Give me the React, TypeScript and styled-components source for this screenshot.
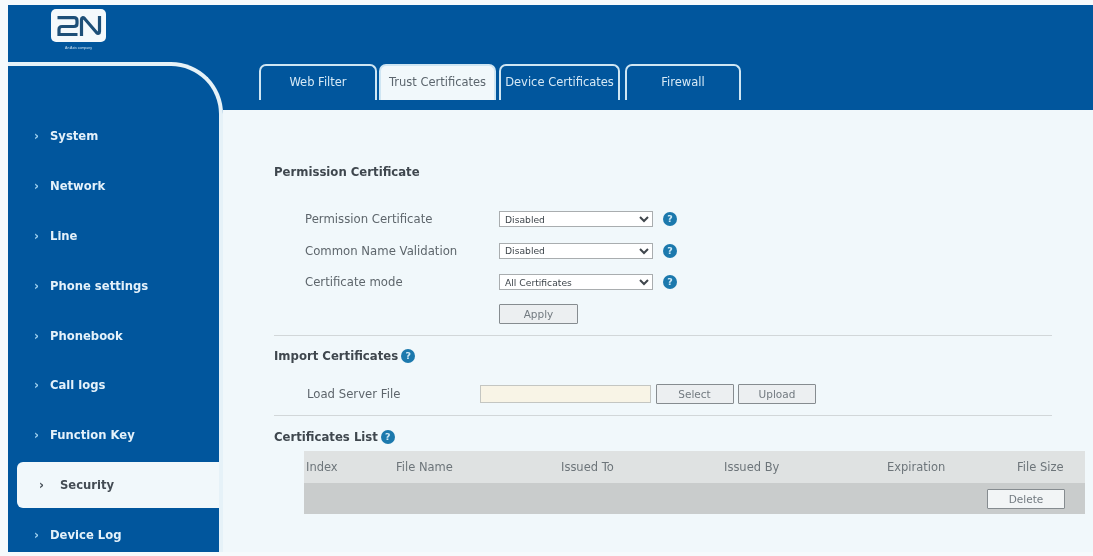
import styled, { createGlobalStyle } from "styled-components";

const BLUE = "#01569d";
const PANEL = "#f1f8fb";
const FONT = `"DejaVu Sans", Verdana, sans-serif`;

const navItems = [
  "System",
  "Network",
  "Line",
  "Phone settings",
  "Phonebook",
  "Call logs",
  "Function Key",
  "Security",
  "Device Log",
];

const tabs = [
  { label: "Web Filter", width: 118, gap: 0 },
  { label: "Trust Certificates", width: 117, gap: 2, active: true },
  { label: "Device Certificates", width: 121, gap: 3 },
  { label: "Firewall", width: 116, gap: 5 },
];

const permissionRows = [
  { label: "Permission Certificate", value: "Disabled" },
  { label: "Common Name Validation", value: "Disabled" },
  { label: "Certificate mode", value: "All Certificates" },
];

const columns = ["Index", "File Name", "Issued To", "Issued By", "Expiration", "File Size"];

export default function App() {
  return (
    <Page>
      <GlobalStyle />
      <Header>
        <Logo>
          <LogoBadge viewBox="0 0 55 33" aria-label="2N">
            <rect width="55" height="33" rx="5" fill="#f4f9fc" />
            <path
              d="M6.5 8.7 H23 C25 8.7 26 9.7 26 11.7 V14.5 C26 16.5 25 17.5 23 17.5 H11 C9 17.5 8 18.5 8 20.5 V25.5 H26.5"
              fill="none"
              stroke="#1d4f78"
              strokeWidth="3.2"
            />
            <path
              d="M30.5 27 V10.5 C30.5 8.5 32 8 33.5 9.5 L45.5 23.5 C47 25 48.5 24.5 48.5 22.5 V7"
              fill="none"
              stroke="#1d4f78"
              strokeWidth="3.2"
            />
          </LogoBadge>
          <LogoCaption>An Axis company</LogoCaption>
        </Logo>
      </Header>
      <Shell>
        <Sidebar>
          <NavList>
            {navItems.map((item) => (
              <NavItem key={item} $active={item === "Security"}>
                <NavArrow $active={item === "Security"}>›</NavArrow>
                {item}
              </NavItem>
            ))}
          </NavList>
        </Sidebar>
        <Main>
          <TabBar>
            {tabs.map((tab) => (
              <Tab key={tab.label} $active={tab.active} $width={tab.width} $gap={tab.gap}>
                {tab.label}
              </Tab>
            ))}
          </TabBar>
          <Panel>
            <Section $height={226}>
              <Heading $top={54}>Permission Certificate</Heading>
              <FormRows>
                {permissionRows.map((row) => (
                  <FormRow key={row.label}>
                    <FieldLabel>{row.label}</FieldLabel>
                    <Select defaultValue={row.value}>
                      <option>{row.value}</option>
                    </Select>
                    <HelpIcon>?</HelpIcon>
                  </FormRow>
                ))}
              </FormRows>
              <ApplyRow>
                <Button $width={79} $height={20}>
                  Apply
                </Button>
              </ApplyRow>
            </Section>
            <Section $height={80}>
              <Heading $top={12}>
                Import Certificates<HelpIcon>?</HelpIcon>
              </Heading>
              <UploadRow>
                <UploadLabel>Load Server File</UploadLabel>
                <FileInput readOnly />
                <Button $width={78} $height={20}>
                  Select
                </Button>
                <Button $width={78} $height={20}>
                  Upload
                </Button>
              </UploadRow>
            </Section>
            <ListSection>
              <Heading $top={13}>
                Certificates List<HelpIcon>?</HelpIcon>
              </Heading>
              <Table>
                <TableHead>
                  {columns.map((col) => (
                    <span key={col}>{col}</span>
                  ))}
                </TableHead>
                <TableBody>
                  <Button $width={78} $height={20} $white>
                    Delete
                  </Button>
                </TableBody>
              </Table>
            </ListSection>
          </Panel>
        </Main>
      </Shell>
    </Page>
  );
}

const GlobalStyle = createGlobalStyle`
  html, body {
    margin: 0;
    background: #f6fafc;
    font-family: ${FONT};
    overflow: hidden;
  }
`;

const Page = styled.div`
  height: 547px;
  padding: 5px 0 4px 8px;
  display: flex;
  flex-direction: column;
  filter: blur(0.5px);
`;

const Header = styled.header`
  height: 57px;
  flex: none;
  background: ${BLUE};
  padding: 4px 0 0 43px;
  box-sizing: border-box;
`;

const Logo = styled.div`
  width: 55px;
  display: flex;
  flex-direction: column;
  align-items: center;
`;

const LogoBadge = styled.svg`
  width: 55px;
  height: 33px;
  display: block;
`;

const LogoCaption = styled.span`
  margin-top: 3px;
  font-size: 3.5px;
  line-height: 6px;
  white-space: nowrap;
  color: #cfe3f2;
  font-family: "Liberation Sans", sans-serif;
`;

const Shell = styled.div`
  flex: 1;
  min-height: 0;
  display: flex;
  background: ${BLUE};
`;

const Sidebar = styled.aside`
  width: 215px;
  flex: none;
  box-sizing: border-box;
  background: ${BLUE};
  border-top: 4px solid #e6f2f8;
  border-right: 4px solid #e6f2f8;
  border-top-right-radius: 52px;
  overflow: hidden;
`;

const NavList = styled.nav`
  display: flex;
  flex-direction: column;
  gap: 3.9px;
  padding-top: 47px;
`;

const NavItem = styled.div<{ $active?: boolean }>`
  height: 46px;
  flex: none;
  display: flex;
  align-items: center;
  font-size: 11.6px;
  font-weight: bold;
  box-sizing: border-box;
  color: ${({ $active }) => ($active ? "#444c54" : "#e4f1fa")};
  background: ${({ $active }) => ($active ? PANEL : "transparent")};
  margin-left: ${({ $active }) => ($active ? "9px" : "0")};
  padding-left: ${({ $active }) => ($active ? "22px" : "26px")};
  border-radius: ${({ $active }) => ($active ? "6px 0 0 6px" : "0")};
`;

const NavArrow = styled.span<{ $active?: boolean }>`
  width: ${({ $active }) => ($active ? "21px" : "16px")};
  font-size: 12px;
  color: ${({ $active }) => ($active ? "#444c54" : "#9fd0ee")};
`;

const Main = styled.main`
  flex: 1;
  min-width: 0;
  display: flex;
  flex-direction: column;
`;

const TabBar = styled.div`
  height: 48px;
  flex: none;
  display: flex;
  align-items: flex-start;
  padding: 2px 0 0 36px;
  box-sizing: border-box;
  background: ${BLUE};
`;

const Tab = styled.div<{ $active?: boolean; $width: number; $gap: number }>`
  width: ${({ $width }) => $width}px;
  height: 36px;
  flex: none;
  margin-left: ${({ $gap }) => $gap}px;
  box-sizing: border-box;
  display: flex;
  align-items: center;
  justify-content: center;
  padding-bottom: 2px;
  font-size: 11.5px;
  white-space: nowrap;
  border: 2px solid #cfe6f3;
  border-bottom: none;
  border-radius: 7px 7px 0 0;
  color: ${({ $active }) => ($active ? "#5c666e" : "#d6e9f6")};
  background: ${({ $active }) => ($active ? PANEL : "transparent")};
`;

const Panel = styled.div`
  flex: 1;
  min-height: 0;
  background: ${PANEL};
  padding-left: 51px;
  padding-right: 8px;
  display: flex;
  flex-direction: column;
`;

const Section = styled.section<{ $height: number }>`
  height: ${({ $height }) => $height}px;
  width: 778px;
  flex: none;
  box-sizing: border-box;
  border-bottom: 1px solid #d2d7d9;
`;

const ListSection = styled.section`
  flex: 1;
`;

const Heading = styled.h2<{ $top: number }>`
  margin: ${({ $top }) => $top}px 0 0;
  font-size: 11.7px;
  line-height: 16px;
  font-weight: bold;
  color: #3f474e;
  display: flex;
  align-items: center;
  gap: 3px;
  white-space: pre;
`;

const FormRows = styled.div`
  margin-top: 31px;
  display: flex;
  flex-direction: column;
  gap: 15.5px;
`;

const FormRow = styled.div`
  height: 16px;
  display: flex;
  align-items: center;
  padding-left: 31px;
`;

const FieldLabel = styled.label`
  width: 194px;
  flex: none;
  font-size: 11.7px;
  color: #5e666c;
`;

const Select = styled.select`
  width: 154px;
  height: 16px;
  flex: none;
  margin: 0 10px 0 0;
  padding: 0 0 0 1px;
  box-sizing: border-box;
  font-family: ${FONT};
  font-size: 9.2px;
  color: #3f464c;
  background: #fff;
  border: 1px solid #a9adaf;
  border-radius: 0;
`;

const HelpIcon = styled.span`
  width: 14px;
  height: 14px;
  flex: none;
  border-radius: 50%;
  background: #1c79ad;
  color: #cfe9f6;
  font-size: 9.5px;
  font-weight: bold;
  line-height: 14px;
  text-align: center;
`;

const ApplyRow = styled.div`
  margin-top: 13px;
  padding-left: 225px;
`;

const Button = styled.button<{ $width: number; $height: number; $white?: boolean }>`
  width: ${({ $width }) => $width}px;
  height: ${({ $height }) => $height}px;
  flex: none;
  padding: 0;
  box-sizing: border-box;
  font-family: ${FONT};
  font-size: 10.5px;
  color: #727a80;
  background: ${({ $white }) => ($white ? "#f2f5f6" : "#eceff1")};
  border: 1px solid #868c90;
  border-radius: 1px;
`;

const UploadRow = styled.div`
  margin-top: 20px;
  height: 20px;
  display: flex;
  align-items: center;
  gap: 4.5px;
  padding-left: 33px;
`;

const UploadLabel = styled.label`
  width: 168.5px;
  flex: none;
  font-size: 11.7px;
  color: #5e666c;
`;

const FileInput = styled.input`
  width: 171px;
  height: 18px;
  flex: none;
  padding: 0;
  box-sizing: border-box;
  background: #f8f4e6;
  border: 1px solid #c4c6c2;
`;

const Table = styled.div`
  width: 781px;
  margin: 6px 0 0 30px;
`;

const TableHead = styled.div`
  height: 32px;
  display: grid;
  grid-template-columns: 90px 165px 163px 163px 130px auto;
  align-items: center;
  padding-left: 2px;
  background: #dfe2e2;
  font-size: 11.5px;
  color: #6d757a;
`;

const TableBody = styled.div`
  height: 31px;
  display: flex;
  align-items: center;
  justify-content: flex-end;
  padding-right: 20px;
  background: #c9cccc;
`;
